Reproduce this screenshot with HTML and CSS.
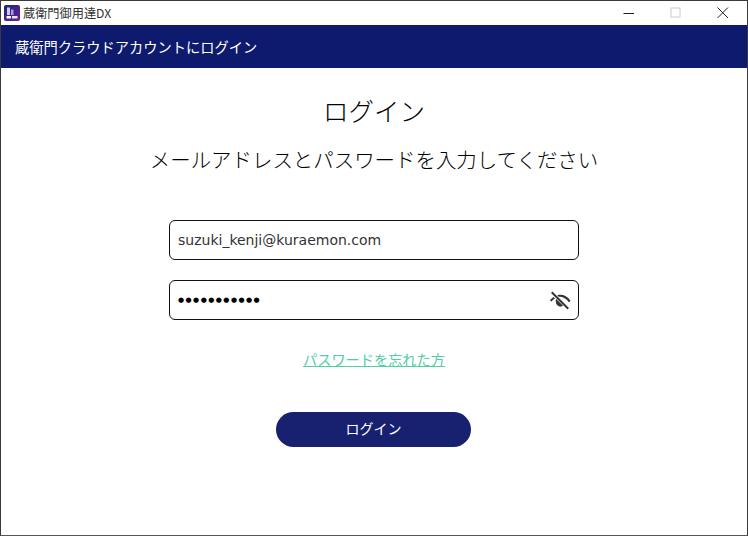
FILE: index.html
```html
<!DOCTYPE html>
<html lang="ja">
<head>
<meta charset="utf-8">
<title>蔵衛門御用達DX</title>
<link rel="stylesheet" href="styles.css">
</head>
<body>
<div class="window">
  <div class="titlebar">
    <svg class="app-icon" viewBox="0 0 16 16" aria-hidden="true">
      <defs><linearGradient id="g" x1="0" y1="0" x2="1" y2="1"><stop offset="0" stop-color="#1c2478"/><stop offset="1" stop-color="#6a1f9a"/></linearGradient></defs>
      <rect width="16" height="16" rx="2" fill="url(#g)"/>
      <rect x="3" y="2.500" width="3" height="7.500" fill="#c9cdf0"/>
      <rect x="7" y="4.500" width="2.500" height="5.500" fill="#9ea4e0"/>
      <rect x="2.500" y="11" width="4.500" height="2.500" fill="#fff"/>
      <rect x="8" y="11" width="5.500" height="2.500" fill="#e6e6f8"/>
    </svg>
    <span class="app-name">蔵衛門御用達DX</span>
    <div class="controls">
      <span class="ctl"><svg width="12" height="12" viewBox="0 0 12 12"><path d="M0.500 6.500h10.500" stroke="#222" stroke-width="1"/></svg></span>
      <span class="ctl"><svg width="12" height="12" viewBox="0 0 12 12"><rect x="1" y="1" width="9" height="9" fill="none" stroke="#ccc" stroke-width="1"/></svg></span>
      <span class="ctl"><svg width="12" height="12" viewBox="0 0 12 12"><path d="M0.500 0.500l10.500 10.500M11 0.500L0.500 11" stroke="#222" stroke-width="1" fill="none"/></svg></span>
    </div>
  </div>
  <header class="banner">蔵衛門クラウドアカウントにログイン</header>
  <main class="content">
    <h1 class="title">ログイン</h1>
    <p class="subtitle">メールアドレスとパスワードを入力してください</p>
    <div class="field first"><span class="value">suzuki_kenji@kuraemon.com</span></div>
    <div class="field second">
      <span class="dots">●●●●●●●●●●●</span>
      <svg class="eye" viewBox="0 0 24 24" aria-hidden="true">
        <path d="M3 3.500l18 18" stroke="#333" stroke-width="2.200" fill="none"/>
        <path d="M1 12.500c1.200-1.500 2.500-2.800 4-3.700l1.500 1.500c-1.400.8-2.500 1.800-3.600 3.400z" fill="#333"/>
        <path d="M9 6.800c5-1.500 10.500.2 14.500 6l-1.800 1.600c-2.800-4.300-7-6.300-11-6z" fill="#333"/>
        <path d="M7.800 10.800l7.600 7.600c-1 .6-2 .9-3.200.9a6 6 0 0 1-4.400-8.500z" fill="#333"/>
      </svg>
    </div>
    <a class="forgot" href="#">パスワードを忘れた方</a>
    <button class="submit" type="button">ログイン</button>
  </main>
</div>
</body>
</html>
```
FILE: styles.css
```css
* { box-sizing: border-box; }
html, body { margin: 0; padding: 0; background: #fff; }
body { width: 748px; height: 536px; overflow: hidden; font-family: "Noto Sans CJK JP", "Noto Sans", sans-serif; }
.window { width: 748px; height: 536px; border: 1px solid #3a3a3a; border-bottom-color: #555; display: flex; flex-direction: column; background: #fff; }
.titlebar { height: 24px; flex: none; display: flex; align-items: center; padding-left: 3px; background: #fff; }
.app-icon { width: 16px; height: 16px; flex: none; }
.app-name { margin-left: 3px; font-size: 12.200px; color: #333; }
.controls { margin-left: auto; display: flex; padding-right: 1px; }
.ctl { width: 47px; height: 23px; display: flex; align-items: center; justify-content: center; }
.banner { height: 43px; flex: none; background: #0e1a6e; color: #fff; font-size: 14.250px; font-weight: 400; display: flex; align-items: center; padding-left: 14px; }
.content { flex: 1; display: flex; flex-direction: column; align-items: center; }
.title { margin: 24px 0 0; font-size: 25.500px; line-height: 36px; font-weight: 300; color: #000; }
.subtitle { margin: 16px 0 0; font-size: 20.450px; line-height: 30px; font-weight: 300; color: #000; }
.field { width: 410px; height: 40px; border: 1px solid #111; border-radius: 6px; display: flex; align-items: center; padding: 0 8px; background: #fff; flex: none; }
.first { margin-top: 46px; }
.second { margin-top: 20px; justify-content: space-between; padding-right: 7px; }
.value { font-family: "DejaVu Sans", sans-serif; font-size: 14px; color: #333; }
.dots { font-family: "DejaVu Sans", sans-serif; font-size: 7px; letter-spacing: 1.450px; color: #000; }
.eye { width: 22px; height: 22px; flex: none; }
.forgot { margin-top: 29px; font-size: 14.200px; line-height: 21px; color: #4fcfa3; font-weight: 400; }
.submit { margin-top: 42px; margin-right: 1px; width: 195px; height: 35px; padding: 0 0 3px; border: none; border-radius: 18px; background: #17216f; color: #fff; font: 400 14px "Noto Sans CJK JP", sans-serif; }
```
